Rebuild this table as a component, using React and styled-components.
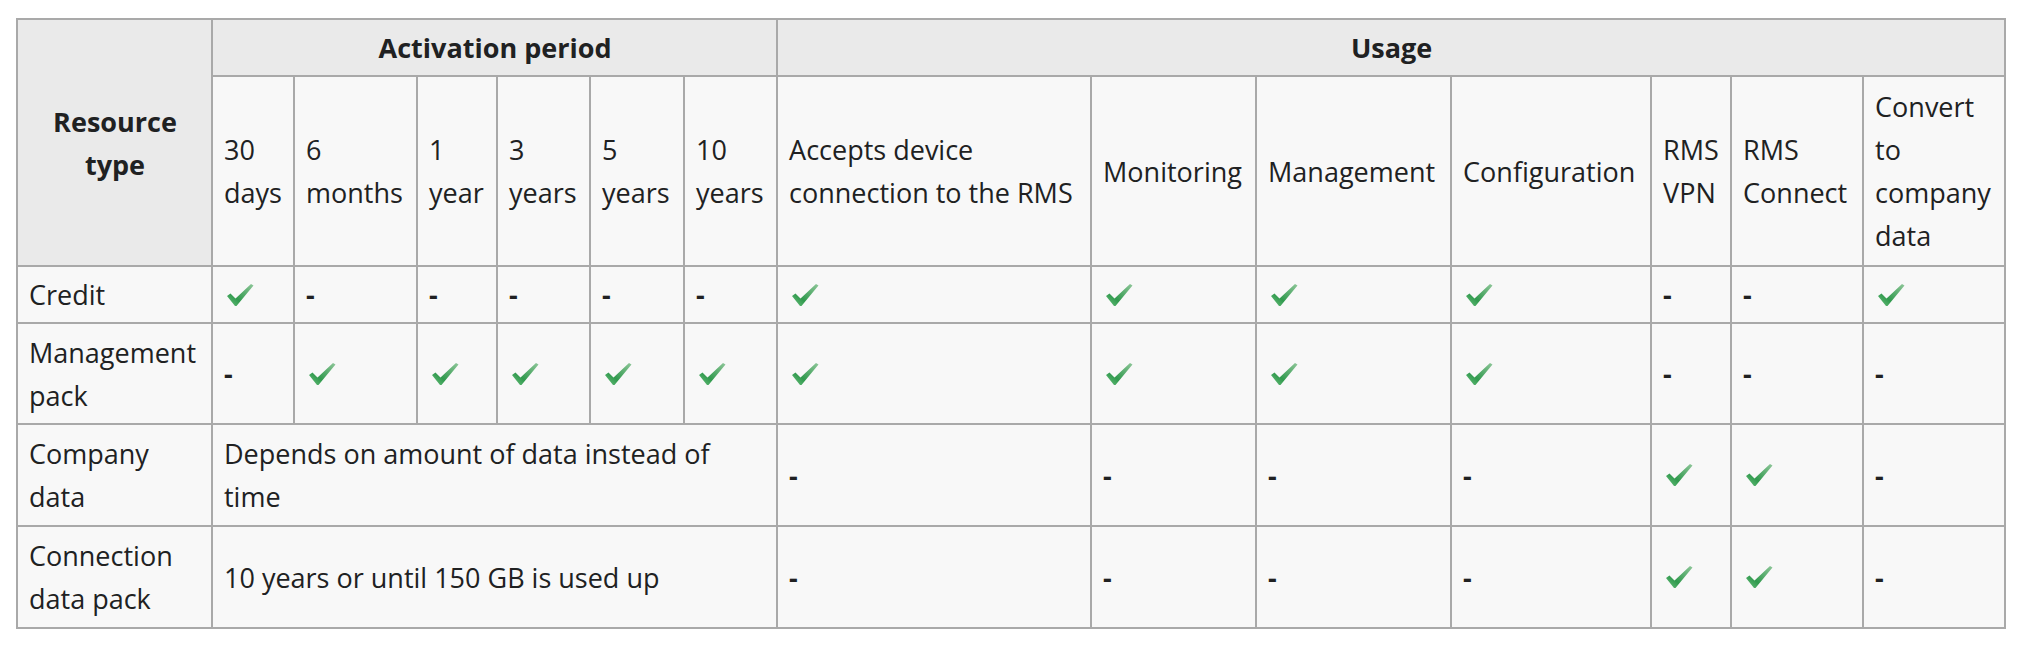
import React from "react";
import styled, { createGlobalStyle } from "styled-components";

const GlobalStyle = createGlobalStyle`
  body {
    margin: 0;
    background: #ffffff;
    font-family: "Open Sans", "DejaVu Sans", sans-serif;
    color: #202122;
  }
`;

const colWidths = [195, 82, 123, 80, 93, 94, 93, 314, 165, 195, 200, 80, 132, 142];

const periods = ["30 days", "6 months", "1 year", "3 years", "5 years", "10 years"];
const usages = [
  "Accepts device connection to the RMS",
  "Monitoring",
  "Management",
  "Configuration",
  "RMS VPN",
  "RMS Connect",
  "Convert to company data",
];

// y = check, n = dash
const rows = [
  { name: "Credit", h: 57, period: "ynnnnn", usage: "yyyynny" },
  { name: "Management pack", h: 101, period: "nyyyyy", usage: "yyyynnn" },
  { name: "Company data", h: 102, note: "Depends on amount of data instead of time", usage: "nnnnyyn" },
  { name: "Connection data pack", h: 102, note: "10 years or until 150 GB is used up", usage: "nnnnyyn" },
];

function Check() {
  return (
    <CheckIcon viewBox="0 0 28 24" aria-label="yes">
      <defs>
        <linearGradient id="tick" x1="0" y1="1" x2="1" y2="0">
          <stop offset="0" stopColor="#6cc07e" />
          <stop offset="0.35" stopColor="#319a4e" />
          <stop offset="1" stopColor="#8fc79a" />
        </linearGradient>
      </defs>
      <polygon points="1,13 4.5,10.5 9.5,15.5 25,1 27.5,2.5 10.5,23 9,23" fill="url(#tick)" />
    </CheckIcon>
  );
}

function Mark({ v }) {
  return v === "y" ? <Check /> : <Dash>-</Dash>;
}

function App() {
  return (
    <Page>
      <GlobalStyle />
      <Table>
        <colgroup>
          {colWidths.map((w, i) => (
            <col key={i} style={{ width: w }} />
          ))}
        </colgroup>
        <thead>
          <tr style={{ height: 57 }}>
            <GroupHead rowSpan={2}>
              Resource
              <br />
              type
            </GroupHead>
            <GroupHead colSpan={6}>Activation period</GroupHead>
            <GroupHead colSpan={7}>Usage</GroupHead>
          </tr>
          <tr style={{ height: 190 }}>
            {periods.map((p) => (
              <SubHead key={p}>{p}</SubHead>
            ))}
            {usages.map((u) => (
              <SubHead key={u}>{u}</SubHead>
            ))}
          </tr>
        </thead>
        <tbody>
          {rows.map((r) => (
            <tr key={r.name} style={{ height: r.h }}>
              <Cell>{r.name}</Cell>
              {r.note ? (
                <Cell colSpan={6}>{r.note}</Cell>
              ) : (
                r.period.split("").map((v, i) => (
                  <Cell key={i}>
                    <Mark v={v} />
                  </Cell>
                ))
              )}
              {r.usage.split("").map((v, i) => (
                <Cell key={"u" + i}>
                  <Mark v={v} />
                </Cell>
              ))}
            </tr>
          ))}
        </tbody>
      </Table>
    </Page>
  );
}

const Page = styled.div`
  padding: 18px 0 0 16px;
`;

const Table = styled.table`
  border-collapse: collapse;
  table-layout: fixed;
  width: 1988px;
  background: #f8f8f8;
  border: 2px solid #a9a9a9;
  font-size: 27px;
  line-height: 43px;

  th,
  td {
    border: 2px solid #a9a9a9;
    padding: 5px 10px 5px 11px;
    vertical-align: middle;
  }
`;

const GroupHead = styled.th`
  background: #eaeaea;
  font-weight: 700;
  text-align: center;
`;

const SubHead = styled.th`
  background: #f8f8f8;
  font-weight: 400;
  text-align: left;
`;

const Cell = styled.td`
  text-align: left;
`;

const Dash = styled.span`
  display: inline-block;
  font-weight: 700;
`;

const CheckIcon = styled.svg`
  width: 28px;
  height: 24px;
  display: block;
  margin-left: 2px;
`;

export default App;
